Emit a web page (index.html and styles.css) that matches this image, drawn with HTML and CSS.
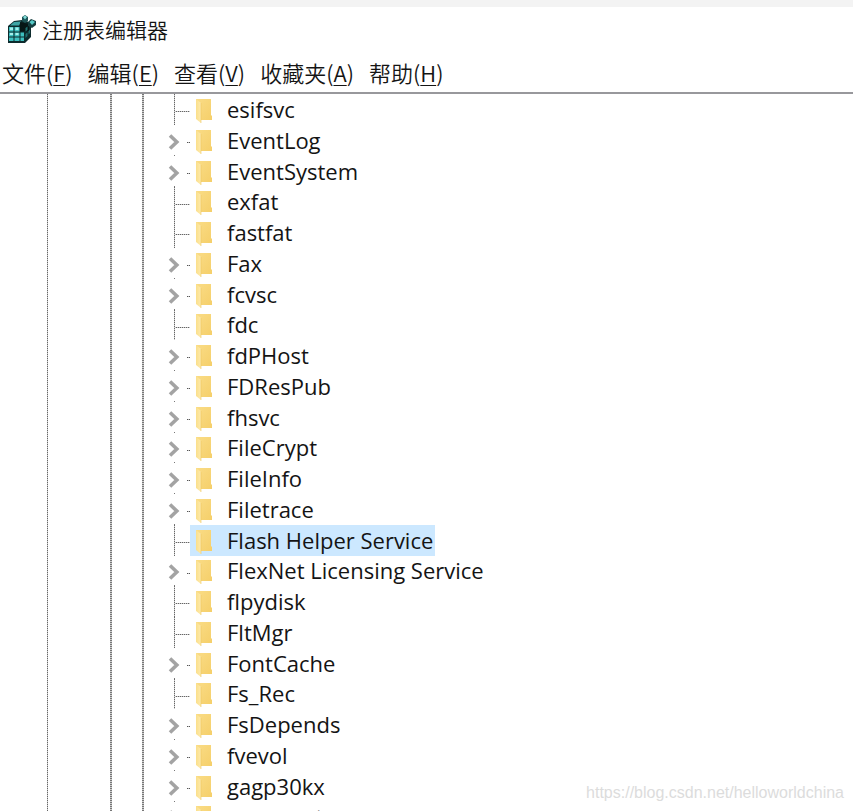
FILE: index.html
```html
<!DOCTYPE html>
<html lang="zh-CN">
<head>
  <meta charset="UTF-8">
  <title>注册表编辑器</title>
  <link rel="stylesheet" href="styles.css">
</head>
<body>
  <svg class="defs" aria-hidden="true">
    <defs>
      <linearGradient id="flap" x1="0" y1="0" x2="1" y2="0">
        <stop offset="0" stop-color="#fbdf8a"/>
        <stop offset="1" stop-color="#fdeaae"/>
      </linearGradient>
      <linearGradient id="back" x1="0" y1="0" x2="1" y2="1">
        <stop offset="0" stop-color="#fadc86"/>
        <stop offset="1" stop-color="#f5cf6a"/>
      </linearGradient>
      <symbol id="folder" viewBox="0 0 18 26">
        <path d="M1 1H16V17L17 18V22H5L1 20Z" fill="url(#back)"/>
        <path d="M1 1L6 5V25L1 21Z" fill="url(#flap)"/>
        <path d="M6 5V25" stroke="#efc75e" stroke-width=".6"/>
      </symbol>
      <symbol id="chevron" viewBox="0 0 12 16">
        <path d="M2 1.5L8.8 8L2 14.5" fill="none" stroke="#a3a3a3" stroke-width="3.6"/>
      </symbol>
    </defs>
  </svg>

  <header class="titlebar">
    <svg class="logo" viewBox="0 0 30 30" aria-hidden="true">
      <path d="M1 12L7 7L15 6L22 8L24 12V23L18 29H1Z" fill="#0d2b2d"/>
      <path d="M7 8L14 7.500L12 11.500H3Z" fill="#3fa5a5"/>
      <path d="M2 13H6.500V17.500H2ZM7.500 13H12.500V17.500H7.500ZM2 18.500H6.500V22.500H2ZM7.500 18.500H12.500V22.500H7.500ZM13.500 18.500H17V22.500H13.500ZM2 23.500H6.500V27H2ZM7.500 23.500H12.500V27H7.500ZM13.500 23.500H17V27H13.500Z" fill="#3dc0c0"/>
      <path d="M3 13.500H6V16H3ZM8.500 13.500H11.500V16H8.500ZM3 19H6V21H3ZM8.500 19H11.500V21H8.500Z" fill="#a5f0ec"/>
      <path d="M13 8L22 10V17L13 17.500Z" fill="#061616"/>
      <path d="M18.500 14L20.500 12.500V16L18.500 17.500ZM18.500 20L20.500 18.500V22L18.500 24ZM21.500 17L23 15.500V19L21.500 20.500Z" fill="#1e7070"/>
      <path d="M15 3L18 1L21 3V7L18 9L15 7Z" fill="#1d5557"/>
      <path d="M16 3L18 1.500L20 3L18 5.500Z" fill="#7fdcd8"/>
      <path d="M21 8L24 5L29 7V11L25 14L21 12Z" fill="#133d3f"/>
      <path d="M22.500 8L25 6L28 8L25 11Z" fill="#56c9c7"/>
    </svg>
    <h1 class="title">注册表编辑器</h1>
  </header>

  <nav class="menubar">
    <button type="button">文件(<u>F</u>)</button>
    <button type="button">编辑(<u>E</u>)</button>
    <button type="button">查看(<u>V</u>)</button>
    <button type="button">收藏夹(<u>A</u>)</button>
    <button type="button">帮助(<u>H</u>)</button>
  </nav>

  <main class="pane">
    <ul class="tree" id="tree"></ul>
  </main>

  <div class="watermark">https://blog.csdn.net/helloworldchina</div>

  <script>
    // [name, has subkeys]
    const keys = [
      ['esifsvc', false], ['EventLog', true], ['EventSystem', true],
      ['exfat', false], ['fastfat', false], ['Fax', true],
      ['fcvsc', true], ['fdc', false], ['fdPHost', true],
      ['FDResPub', true], ['fhsvc', true], ['FileCrypt', true],
      ['FileInfo', true], ['Filetrace', true], ['Flash Helper Service', false],
      ['FlexNet Licensing Service', true], ['flpydisk', false], ['FltMgr', false],
      ['FontCache', true], ['Fs_Rec', false], ['FsDepends', true],
      ['fvevol', true], ['gagp30kx', true], ['gencounter', true]
    ];
    const selected = 'Flash Helper Service';

    document.getElementById('tree').innerHTML = keys.map(([name, sub]) => `
      <li class="row ${sub ? 'parent' : 'leaf'}">
        <span class="branch">${sub ? `<button type="button" class="expander" aria-label="${name}"><svg><use href="#chevron"/></svg></button>` : ''}</span>
        <span class="key${name === selected ? ' selected' : ''}"><svg class="folder"><use href="#folder"/></svg>${name}</span>
      </li>`).join('');
  </script>
</body>
</html>
```
FILE: styles.css
```css
* { box-sizing: border-box; }
body { margin: 0; height: 100vh; display: flex; flex-direction: column; overflow: hidden; border-top: 7px solid #f3f3f3; background: #fff; color: #141414; font-family: "Open Sans", "Noto Sans CJK SC", sans-serif; font-size: 22px; }
.defs { position: absolute; width: 0; height: 0; }

.titlebar { display: flex; align-items: center; gap: 5px; height: 46px; padding: 0 0 2px 7px; flex: none; }
.logo { width: 30px; height: 30px; }
.title { margin: 0; font-size: 21px; font-weight: 350; line-height: 30px; font-family: "Noto Sans CJK SC", sans-serif; }

.menubar { display: flex; gap: 15px; height: 41px; padding: 0 2px 2px; flex: none; border-bottom: 2px solid #98989c; }
.menubar button { border: 0; padding: 0; background: none; color: inherit; font: 350 22px "Noto Sans CJK SC", sans-serif; white-space: nowrap; }
.menubar u { text-decoration-thickness: 1px; text-underline-offset: 3px; }

.pane { flex: 1; overflow: hidden; }
.tree {
  margin: 0;
  padding: 0 0 0 168px;
  list-style: none;
  background-image: repeating-linear-gradient(#666 0 1px, #ccc 1px 2px), repeating-linear-gradient(#777 0 1px, #ccc 1px 2px), repeating-linear-gradient(#777 0 1px, #ccc 1px 2px);
  background-repeat: no-repeat;
  background-size: 1px 100%, 2px 100%, 2px 100%;
  background-position: 47px 0, 110px 0, 142px 0;
}
.row { display: flex; height: 31px; white-space: nowrap; }
.row:nth-child(4n) { height: 30px; }
.branch { display: flex; align-items: center; width: 22px; background-repeat: no-repeat; }
.leaf .branch {
  background-image: repeating-linear-gradient(#666 0 1px, #ccc 1px 2px), repeating-linear-gradient(90deg, #666 0 1px, #ccc 1px 2px);
  background-size: 1px 100%, 16px 1px;
  background-position: 6px 0, 6px 17px;
}
.parent .branch {
  background-image: linear-gradient(#777, #777), repeating-linear-gradient(90deg, #555 0 1px, #bbb 1px 2px);
  background-size: 1px 1px, 3px 1px;
  background-position: 6px 100%, 19px 17px;
}
.expander { display: flex; border: 0; padding: 2px 0 0; background: none; }
.expander svg { width: 12px; height: 16px; }
.key { display: flex; align-items: center; padding: 0 2px 2px 5px; }
.selected { background: #cce8ff; }
.folder { width: 18px; height: 26px; margin: 4px 14px 0 0; }

.watermark { position: absolute; right: 9px; bottom: 8px; color: #dcdcdc; font: 16px/20px "Liberation Sans", sans-serif; }
```
